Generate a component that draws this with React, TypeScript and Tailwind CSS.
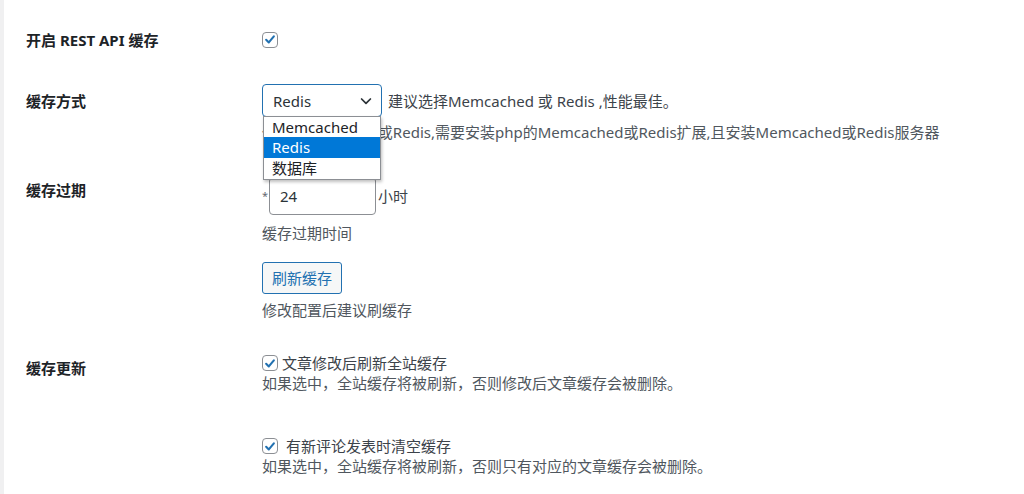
import React from "react";

const FONT = { fontFamily: '"Segoe UI", "Noto Sans", "Noto Sans CJK SC", sans-serif' };

function Check() {
  return (
    <span className="inline-flex w-4 h-4 shrink-0 items-center justify-center rounded-[4px] border border-[#8c8f94] bg-white">
      <svg width="15" height="15" viewBox="0 0 20 20">
        <path d="M4.5 10.5 L8.3 14.2 L15.5 5.5" fill="none" stroke="#2271b1" strokeWidth="3" strokeLinecap="round" strokeLinejoin="round" />
      </svg>
    </span>
  );
}

export default function App() {
  return (
    <div className="w-[1024px] h-[494px] overflow-hidden bg-white flex text-[15px] leading-5 text-[#3c434a]" style={FONT}>
      <div className="w-[4px] shrink-0 bg-[#f0f0f1]" />
      <div className="flex-1 pl-[22px] flex flex-col">
        {/* Row 1 */}
        <div className="flex pt-[30px]">
          <div className="w-[236px] shrink-0 font-bold text-[#1d2327]">开启 REST API 缓存</div>
          <div className="pt-[1px]"><Check /></div>
        </div>
        {/* Row 2 */}
        <div className="flex mt-[33px]">
          <div className="w-[236px] shrink-0 font-bold text-[#1d2327] pt-[7px]">缓存方式</div>
          <div className="flex flex-col">
            <div className="flex items-center">
              <div className="relative z-10">
                <div className="w-[120px] h-[33px] rounded-[4px] border border-[#2271b1] flex items-center justify-between pl-[10px] pr-[7px] text-[#2c3338] bg-white">
                  <span>Redis</span>
                  <svg width="16" height="16" viewBox="0 0 20 20">
                    <path d="M4.5 7.5 L10 13 L15.5 7.5" fill="none" stroke="#2c3338" strokeWidth="2.2" strokeLinecap="round" strokeLinejoin="round" />
                  </svg>
                </div>
                <div className="absolute left-[1px] top-[32px] w-[118px] bg-white border border-[#8c8f94] shadow-[1px_2px_3px_rgba(0,0,0,0.25)] text-[15px] text-[#1d2327]">
                  <div className="h-[20px] leading-[20px] px-[8px]">Memcached</div>
                  <div className="h-[21px] leading-[21px] px-[8px] bg-[#0078d7] text-white">Redis</div>
                  <div className="h-[21px] leading-[21px] px-[8px]">数据库</div>
                </div>
              </div>
              <span className="ml-[6px]">建议选择Memcached 或 Redis ,性能最佳。</span>
            </div>
            <div className="mt-[5px] text-[#50575e] whitespace-nowrap">使用Memcached或Redis,需要安装php的Memcached或Redis扩展,且安装Memcached或Redis服务器</div>
          </div>
        </div>
        {/* Row 3 */}
        <div className="flex mt-[35px]">
          <div className="w-[236px] shrink-0 font-bold text-[#1d2327] pt-[3px]">缓存过期</div>
          <div className="flex flex-col items-start">
            <div className="flex items-center">
              <span className="text-[11px] text-[#646970] w-[7px]">*</span>
              <div className="w-[107px] h-[38px] rounded-[4px] border border-[#8c8f94] flex items-center pl-[10px] text-[#2c3338]">24</div>
              <span className="ml-[2px]">小时</span>
            </div>
            <div className="mt-[8px] text-[#50575e]">缓存过期时间</div>
            <button className="mt-[19px] h-[32px] px-[9px] rounded-[3px] border border-[#2271b1] bg-[#f6f7f7] text-[#2271b1] text-[15px]">刷新缓存</button>
            <div className="mt-[6px] text-[#50575e]">修改配置后建议刷缓存</div>
          </div>
        </div>
        {/* Row 4 */}
        <div className="flex mt-[33px]">
          <div className="w-[236px] shrink-0 font-bold text-[#1d2327] pt-[5px]">缓存更新</div>
          <div className="flex flex-col">
            <div className="flex items-center gap-[4px]"><Check /><span>文章修改后刷新全站缓存</span></div>
            <div className="text-[#50575e]">如果选中，全站缓存将被刷新，否则修改后文章缓存会被删除。</div>
            <div className="flex items-center gap-[8px] mt-[43px]"><Check /><span>有新评论发表时清空缓存</span></div>
            <div className="text-[#50575e]">如果选中，全站缓存将被刷新，否则只有对应的文章缓存会被删除。</div>
          </div>
        </div>
      </div>
    </div>
  );
}
